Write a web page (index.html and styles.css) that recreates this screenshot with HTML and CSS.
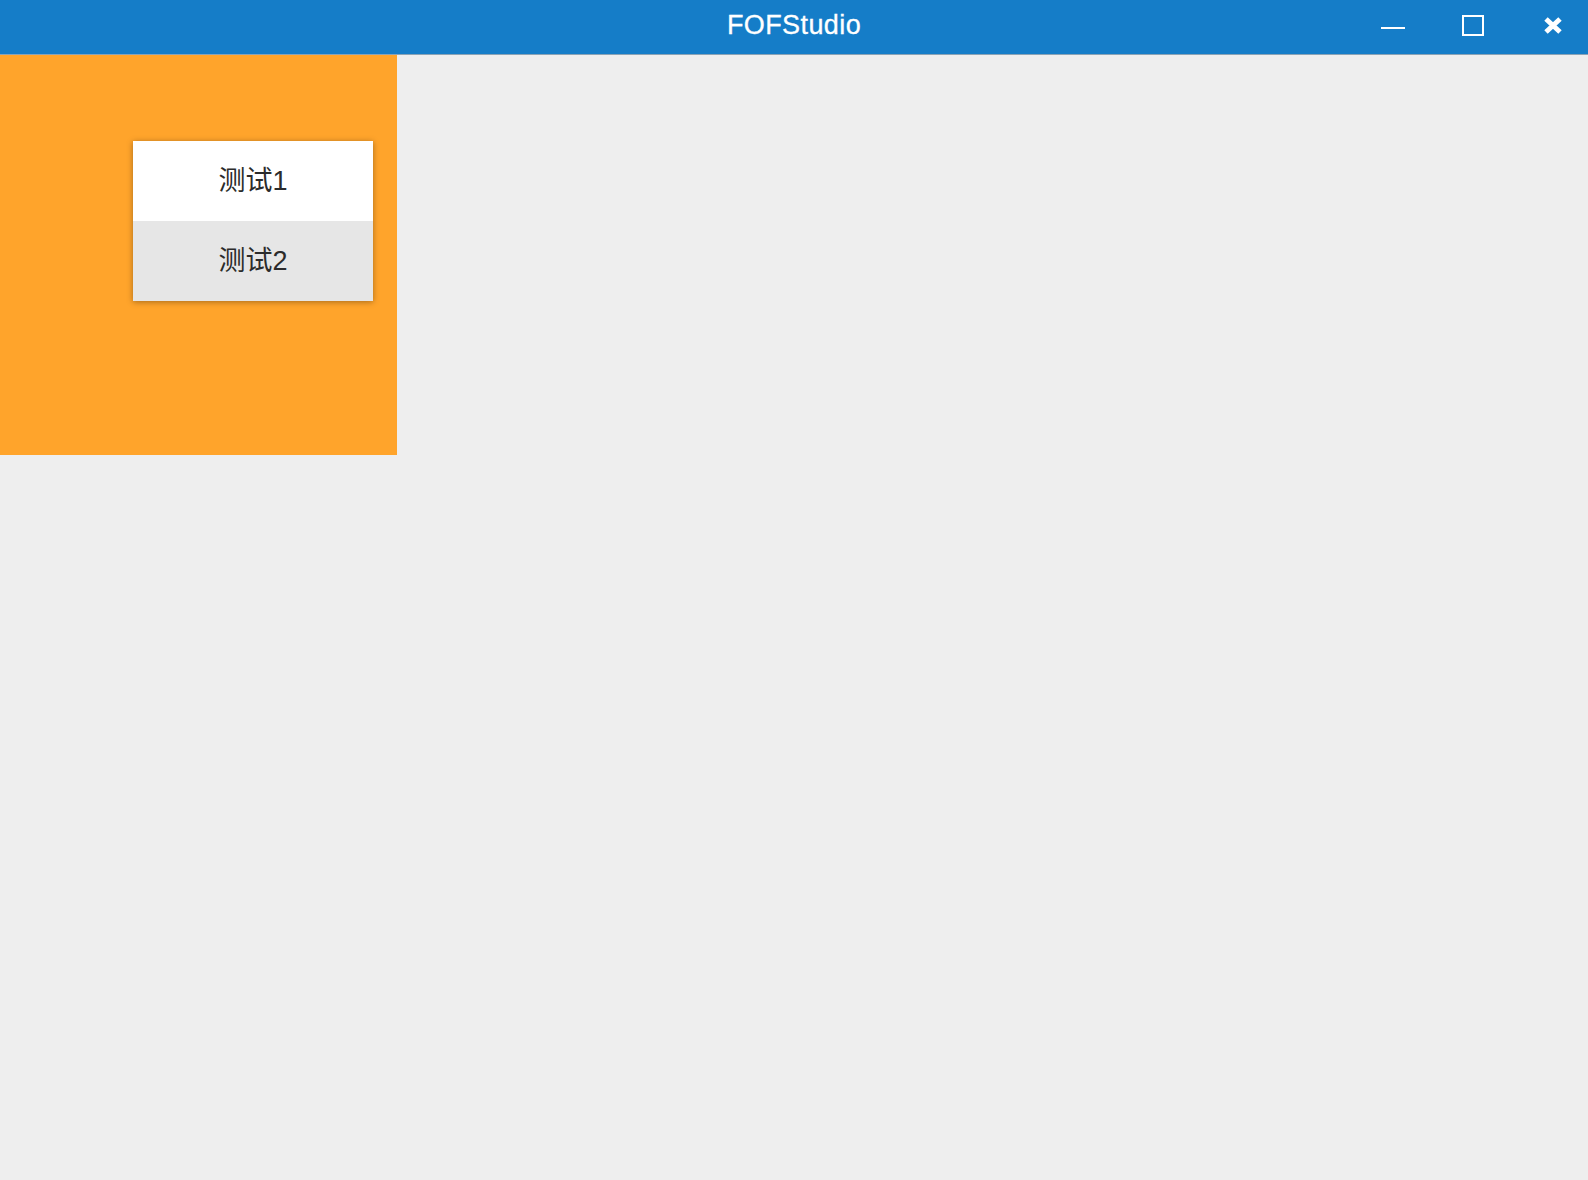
FILE: index.html
```html
<!DOCTYPE html>
<html lang="zh-CN">
<head>
    <meta charset="UTF-8">
    <meta name="viewport" content="width=device-width, initial-scale=1.0">
    <title>FOFStudio</title>
    <link rel="stylesheet" href="styles.css">
</head>
<body>
    <div class="window">
        <div class="titlebar">
            <div class="title">FOFStudio</div>
            <div class="controls">
                <span class="ctl ctl-min"><span class="bar"></span></span>
                <span class="ctl ctl-max"><span class="box"></span></span>
                <span class="ctl ctl-close">
                    <svg width="20" height="19" viewBox="0 0 20 19">
                        <path d="M3 3 L17 16 M17 3 L3 16" stroke="#fff" stroke-width="5" stroke-linecap="butt"/>
                    </svg>
                </span>
            </div>
        </div>
        <div class="content">
            <div class="panel">
                <ul class="menu">
                    <li class="menu-item">测试1</li>
                    <li class="menu-item hover">测试2</li>
                </ul>
            </div>
        </div>
    </div>
</body>
</html>
```

FILE: styles.css
```css
html, body { margin: 0; padding: 0; height: 100%; }
body { background: #eeeeee; font-family: "Liberation Sans", "Noto Sans CJK SC", sans-serif; }
.window { height: 100%; display: flex; flex-direction: column; }
.titlebar { height: 54px; background: #157dc8; border-bottom: 1px solid #8aa3b6; position: relative; display: flex; align-items: center; justify-content: center; }
.title { color: #fff; font-size: 27px; letter-spacing: 0.4px; margin-top: -4px; -webkit-text-stroke: 0.3px #fff; }
.controls { position: absolute; right: 15px; top: 0; height: 54px; display: flex; align-items: center; gap: 40px; }
.ctl { width: 40px; height: 54px; display: flex; align-items: center; justify-content: center; }
.ctl-min .bar { width: 24px; height: 2px; background: #fff; margin-top: 2px; }
.ctl-max .box { width: 18px; height: 17px; border: 2px solid #fff; margin-top: -4px; }
.ctl-close svg { margin-top: -4px; }
.content { flex: 1; }
.panel { width: 397px; height: 400px; background: #ffa42b; position: relative; }
.menu { position: absolute; left: 133px; top: 86px; width: 240px; margin: 0; padding: 0; list-style: none; background: #fff; box-shadow: 0 1px 6px rgba(0,0,0,0.35); }
.menu-item { height: 80px; line-height: 80px; text-align: center; font-size: 27px; color: #2b2b2b; }
.menu-item.hover { background: #e6e6e6; }
```
